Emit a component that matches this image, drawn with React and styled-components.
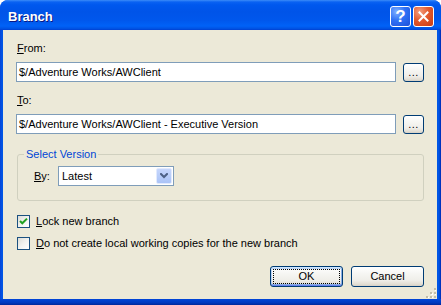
import React from "react";
import styled, { createGlobalStyle } from "styled-components";

const Global = createGlobalStyle`
  html, body { margin: 0; padding: 0; background: #ffffff; }
  body { font-family: "Liberation Sans", Arial, sans-serif; font-size: 11px; color: #000; }
  * { box-sizing: border-box; }
`;

const Window = styled.div`
  width: 441px;
  height: 305px;
  display: flex;
  flex-direction: column;
  border-radius: 8px 8px 0 0;
  overflow: hidden;
  background: #0055e5;
`;

const TitleBar = styled.div`
  height: 30px;
  flex: none;
  display: flex;
  align-items: center;
  padding: 0 7px 0 8px;
  background: linear-gradient(
    to bottom,
    #3c8cf8 0px,
    #0a62f2 2px,
    #0058ee 5px,
    #0054e8 12px,
    #0057ec 20px,
    #0062f7 26px,
    #0050e0 29px,
    #003dd0 30px
  );
`;

const Title = styled.div`
  flex: 1;
  color: #ffffff;
  font-family: "Liberation Sans", Arial, sans-serif;
  font-weight: bold;
  font-size: 13px;
  line-height: 16px;
  margin-top: 4px;
  text-shadow: 1px 1px 0 #0a1883;
`;

const CaptionButton = styled.div`
  width: 21px;
  height: 21px;
  margin-left: 2px;
  margin-top: 3px;
  border: 1px solid #ffffff;
  border-radius: 3px;
  display: flex;
  align-items: center;
  justify-content: center;
  background: ${(p) =>
    p.$close
      ? "radial-gradient(circle at 30% 25%, #f39e7f 0%, #e35a2e 45%, #c93a12 100%)"
      : "radial-gradient(circle at 30% 25%, #7fb0ff 0%, #2f71f5 45%, #1d4fd8 100%)"};
  color: #fff;
  font-weight: bold;
  font-size: 17px;
  line-height: 1;
`;

const Frame = styled.div`
  flex: 1;
  display: flex;
  padding: 0 4px 6px 3px;
  background: linear-gradient(to right, #0843d6 0, #0055e5 2px, #0055e5 calc(100% - 2px), #0028b0 100%);
  position: relative;
`;

const BottomEdge = styled.div`
  position: absolute;
  left: 0;
  right: 0;
  bottom: 0;
  height: 6px;
  background: linear-gradient(to bottom, #0046d8, #0039c0 60%, #00289a);
`;

const Client = styled.div`
  flex: 1;
  background: #ece9d8;
  padding: 12px 13px 11px 13px;
  display: flex;
  flex-direction: column;
  position: relative;
  z-index: 1;
`;

const Label = styled.div`
  line-height: 13px;
  height: 13px;
  padding-left: 1px;
  margin-top: ${(p) => p.$mt || 0}px;
`;

const U = styled.span`
  text-decoration: underline;
  text-underline-offset: 1px;
`;

const FieldRow = styled.div`
  display: flex;
  align-items: center;
  height: 20px;
  margin-top: ${(p) => p.$mt || 0}px;
`;

const TextBox = styled.div`
  flex: 1;
  height: 20px;
  border: 1px solid #7f9db9;
  background: #ffffff;
  padding: 0 2px;
  line-height: 18px;
  white-space: nowrap;
  overflow: hidden;
`;

const XPButton = styled.div`
  width: ${(p) => p.$w}px;
  height: ${(p) => p.$h}px;
  margin-left: ${(p) => p.$ml || 0}px;
  border: 1px solid #003c74;
  border-radius: 3px;
  background: linear-gradient(to bottom, #ffffff 0%, #f6f6f3 35%, #efeee9 70%, #e2ded4 90%, #d6d0c5 100%);
  box-shadow: ${(p) =>
    p.$default
      ? "inset 0 1px 0 #cee7ff, inset 0 -1px 0 #6982ee, inset 1px 0 0 #bcd4f6, inset -1px 0 0 #89ade4, inset 0 2px 0 #bcd4f6, inset 0 -2px 0 #89ade4"
      : "none"};
  display: flex;
  align-items: ${(p) => (p.$dots ? "flex-end" : "center")};
  justify-content: center;
  line-height: 13px;
  padding: ${(p) => (p.$default ? "2px" : "0")};
  flex: none;
`;

const FocusRect = styled.div`
  flex: 1;
  align-self: stretch;
  border: 1px dotted #000;
  display: flex;
  align-items: center;
  justify-content: center;
`;

const Dots = styled.span`
  font-size: 11px;
  line-height: 11px;
  padding-bottom: 3px;
  letter-spacing: 0.5px;
`;

const Group = styled.fieldset`
  margin: 14px 0 0 1px;
  padding: 5px 0 14px 0;
  border: 1px solid #d0d0bf;
  border-radius: 3px;
  min-width: 0;
`;

const Legend = styled.legend`
  color: #0046d5;
  padding: 0 2px;
  margin-left: 6px;
  line-height: 13px;
`;

const ByRow = styled.div`
  display: flex;
  align-items: center;
  height: 20px;
  padding-left: 15px;
`;

const ByLabel = styled.div`
  width: 25px;
  line-height: 13px;
  padding-left: 1px;
`;

const Combo = styled.div`
  width: 116px;
  height: 20px;
  border: 1px solid #7f9db9;
  background: #fff;
  display: flex;
  align-items: stretch;
  padding: 1px;
`;

const ComboText = styled.div`
  flex: 1;
  line-height: 16px;
  padding-left: 2px;
`;

const ComboButton = styled.div`
  width: 16px;
  border: 1px solid #e1eafe;
  border-radius: 2px;
  background: linear-gradient(to bottom, #c6d6fc 0%, #b8cdf9 50%, #aac3f7 100%);
  display: flex;
  align-items: center;
  justify-content: center;
`;

const CheckRow = styled.div`
  display: flex;
  align-items: center;
  height: 13px;
  margin-top: ${(p) => p.$mt || 0}px;
  margin-left: 1px;
`;

const CheckBox = styled.div`
  width: 13px;
  height: 13px;
  flex: none;
  border: 1px solid #1c5180;
  background: linear-gradient(135deg, #dcdcd7 0%, #f2f2ef 50%, #ffffff 100%);
  display: flex;
  align-items: center;
  justify-content: center;
`;

const CheckText = styled.div`
  margin-left: 6px;
  line-height: 13px;
  white-space: nowrap;
`;

const ButtonRow = styled.div`
  display: flex;
  justify-content: flex-end;
  margin-top: 16px;
`;

const Grip = styled.svg`
  position: absolute;
  right: 1px;
  bottom: 1px;
`;

export default function App() {
  return (
    <>
      <Global />
      <Window>
        <TitleBar>
          <Title>Branch</Title>
          <CaptionButton>?</CaptionButton>
          <CaptionButton $close>
            <svg width="11" height="11" viewBox="0 0 11 11">
              <path d="M1.5 1.5 L9.5 9.5 M9.5 1.5 L1.5 9.5" stroke="#fff" strokeWidth="2" strokeLinecap="square" />
            </svg>
          </CaptionButton>
        </TitleBar>
        <Frame>
          <Client>
            <Label>
              <U>F</U>rom:
            </Label>
            <FieldRow $mt={7}>
              <TextBox>$/Adventure Works/AWClient</TextBox>
              <XPButton $w={21} $h={19} $ml={7} $dots>
                <Dots>...</Dots>
              </XPButton>
            </FieldRow>
            <Label $mt={12}>
              <U>T</U>o:
            </Label>
            <FieldRow $mt={7}>
              <TextBox>$/Adventure Works/AWClient - Executive Version</TextBox>
              <XPButton $w={21} $h={19} $ml={7} $dots>
                <Dots>...</Dots>
              </XPButton>
            </FieldRow>
            <Group>
              <Legend>Select Version</Legend>
              <ByRow>
                <ByLabel>
                  <U>B</U>y:
                </ByLabel>
                <Combo>
                  <ComboText>Latest</ComboText>
                  <ComboButton>
                    <svg width="8" height="6" viewBox="0 0 8 6">
                      <path d="M1 1 L4 4 L7 1" stroke="#4d6185" strokeWidth="2" fill="none" strokeLinecap="square" />
                    </svg>
                  </ComboButton>
                </Combo>
              </ByRow>
            </Group>
            <CheckRow $mt={14}>
              <CheckBox>
                <svg width="9" height="9" viewBox="0 0 9 9">
                  <path d="M1 4 L3.3 6.3 L8 1.6" stroke="#21a121" strokeWidth="2" fill="none" />
                </svg>
              </CheckBox>
              <CheckText>
                <U>L</U>ock new branch
              </CheckText>
            </CheckRow>
            <CheckRow $mt={9}>
              <CheckBox />
              <CheckText>
                <U>D</U>o not create local working copies for the new branch
              </CheckText>
            </CheckRow>
            <ButtonRow>
              <XPButton $w={73} $h={21} $default>
                <FocusRect>OK</FocusRect>
              </XPButton>
              <XPButton $w={73} $h={21} $ml={8}>
                Cancel
              </XPButton>
            </ButtonRow>
            <Grip width="10" height="10" viewBox="0 0 10 10">
              {[
                [8, 0],
                [8, 4],
                [4, 4],
                [8, 8],
                [4, 8],
                [0, 8],
              ].map(([x, y], i) => (
                <g key={i}>
                  <rect x={x + 1} y={y + 1} width="2" height="2" fill="#ffffff" />
                  <rect x={x} y={y} width="2" height="2" fill="#c1bda9" />
                </g>
              ))}
            </Grip>
          </Client>
          <BottomEdge />
        </Frame>
      </Window>
    </>
  );
}
